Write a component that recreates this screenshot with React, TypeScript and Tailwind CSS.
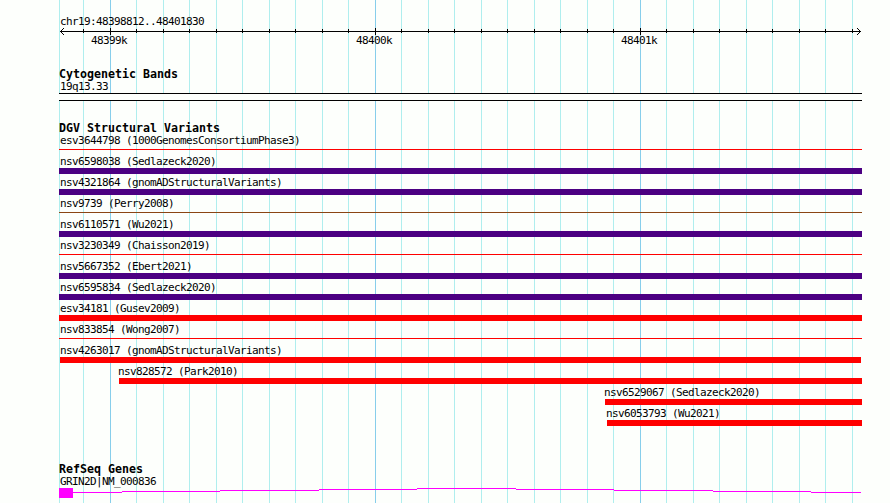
import clsx from "clsx";

type Variant = {
	id: string;
	study: string;
	left: number;
	width: number;
	labelLeft: number;
	color: string;
	thin?: boolean;
};

const PURPLE = "bg-[#4b0082]";
const RED = "bg-[#ff0000]";
const BROWN = "bg-[#8b4513]";

// pixel offsets are measured from the left edge of the panel
const variants: Variant[] = [
	{ id: "esv3644798", study: "1000GenomesConsortiumPhase3", left: 0, width: 803, labelLeft: 1, color: RED, thin: true },
	{ id: "nsv6598038", study: "Sedlazeck2020", left: 0, width: 803, labelLeft: 1, color: PURPLE },
	{ id: "nsv4321864", study: "gnomADStructuralVariants", left: 0, width: 803, labelLeft: 1, color: PURPLE },
	{ id: "nsv9739", study: "Perry2008", left: 0, width: 803, labelLeft: 1, color: BROWN, thin: true },
	{ id: "nsv6110571", study: "Wu2021", left: 0, width: 803, labelLeft: 1, color: PURPLE },
	{ id: "nsv3230349", study: "Chaisson2019", left: 0, width: 803, labelLeft: 1, color: RED, thin: true },
	{ id: "nsv5667352", study: "Ebert2021", left: 0, width: 803, labelLeft: 1, color: PURPLE },
	{ id: "nsv6595834", study: "Sedlazeck2020", left: 0, width: 803, labelLeft: 1, color: PURPLE },
	{ id: "esv34181", study: "Gusev2009", left: 0, width: 803, labelLeft: 1, color: RED },
	{ id: "nsv833854", study: "Wong2007", left: 0, width: 803, labelLeft: 1, color: RED, thin: true },
	{ id: "nsv4263017", study: "gnomADStructuralVariants", left: 1, width: 801, labelLeft: 1, color: RED },
	{ id: "nsv828572", study: "Park2010", left: 60, width: 743, labelLeft: 59, color: RED },
	{ id: "nsv6529067", study: "Sedlazeck2020", left: 546, width: 257, labelLeft: 545, color: RED },
	{ id: "nsv6053793", study: "Wu2021", left: 548, width: 255, labelLeft: 547, color: RED },
];

const majors = [51, 316, 581];
const minors = [
	24, 77, 104, 130, 157, 183, 210, 236, 263, 289, 342, 369, 395, 422, 448, 475,
	501, 528, 554, 607, 634, 660, 687, 713, 740, 766, 793,
];

const Grid = () => (
	<svg
		className="absolute left-0 top-0"
		width="803"
		height="503"
		shapeRendering="crispEdges"
	>
		{[0, ...minors].map((x) => (
			<rect key={x} x={x} y="0" width="1" height="503" fill="#afeeee" />
		))}
		{majors.map((x) => (
			<rect key={x} x={x} y="0" width="1" height="503" fill="#87ceeb" />
		))}
	</svg>
);

const Ruler = () => (
	<svg
		className="block"
		width="803"
		height="8"
		shapeRendering="crispEdges"
	>
		<rect x="1" y="3" width="801" height="1" />
		{minors.map((x) => (
			<rect key={x} x={x} y="1" width="1" height="4" />
		))}
		{majors.map((x) => (
			<rect key={x} x={x} y="0" width="1" height="7" />
		))}
		{[1, 2, 3].map((n) => (
			<g key={n}>
				<rect x={1 + n} y={3 - n} width="1" height="1" />
				<rect x={1 + n} y={3 + n} width="1" height="1" />
				<rect x={801 - n} y={3 - n} width="1" height="1" />
				<rect x={801 - n} y={3 + n} width="1" height="1" />
			</g>
		))}
	</svg>
);

const Title = ({ children }: { children: string }) => (
	<h2 className="h-3 text-[11.63px] leading-3 font-bold">{children}</h2>
);

const Label = ({ children }: { children: string }) => (
	<p className="pl-px h-[11px] text-[11px] leading-[9px] tracking-[-0.622px]">
		{children}
	</p>
);

const VariantRow = ({ variant }: { variant: Variant }) => (
	<div className="h-[21px]">
		<p
			className="h-[11px] text-[11px] leading-[9px] tracking-[-0.622px]"
			style={{ paddingLeft: variant.labelLeft }}
		>
			{variant.id} ({variant.study})
		</p>
		<div
			className={clsx(variant.color, variant.thin ? "mt-0.5 h-px" : "h-1.5")}
			style={{ marginLeft: variant.left, width: variant.width }}
		/>
	</div>
);

// the intron line is a shallow arch, one pixel per step
const steps = [
	[14, 63, 4],
	[63, 161, 3],
	[161, 260, 2],
	[260, 358, 1],
	[358, 457, 0],
	[457, 555, 1],
	[555, 654, 2],
	[654, 752, 3],
	[752, 802, 4],
];

const Gene = () => (
	<svg
		className="block"
		width="803"
		height="10"
		fill="#ff00ff"
		shapeRendering="crispEdges"
	>
		<rect x="0" y="0" width="14" height="10" />
		{steps.map(([from, to, y]) => (
			<rect key={from} x={from} y={y} width={to - from} height="1" />
		))}
	</svg>
);

const App = () => {
	return (
		<div className="relative h-[503px] w-[890px] overflow-hidden bg-[#fdfffc] pl-[59px] text-black whitespace-nowrap [font-family:'DejaVu_Sans_Mono',monospace]">
			<div className="relative w-[803px]">
				<Grid />
				<div className="relative">
					<div className="pt-[17px]">
						<Label>chr19:48398812..48401830</Label>
						<Ruler />
						<div className="flex gap-[229px] pl-[31px]">
							<div className="w-9">
								<Label>48399k</Label>
							</div>
							<div className="w-9">
								<Label>48400k</Label>
							</div>
							<div className="w-9">
								<Label>48401k</Label>
							</div>
						</div>
					</div>

					<section className="pt-[21px]">
						<Title>Cytogenetic Bands</Title>
						<div className="pt-0.5">
							<Label>19q13.33</Label>
						</div>
						<div className="h-[8px] border-y border-black bg-[#fdfffc]" />
					</section>

					<section className="pt-[21px]">
						<Title>DGV Structural Variants</Title>
						<div className="pt-0.5">
							{variants.map((variant) => (
								<VariantRow variant={variant} key={variant.id} />
							))}
						</div>
					</section>

					<section className="pt-[33px]">
						<Title>RefSeq Genes</Title>
						<div className="pt-0.5">
							<Label>GRIN2D|NM_000836</Label>
						</div>
						<Gene />
					</section>
				</div>
			</div>
		</div>
	);
};

export default App;
